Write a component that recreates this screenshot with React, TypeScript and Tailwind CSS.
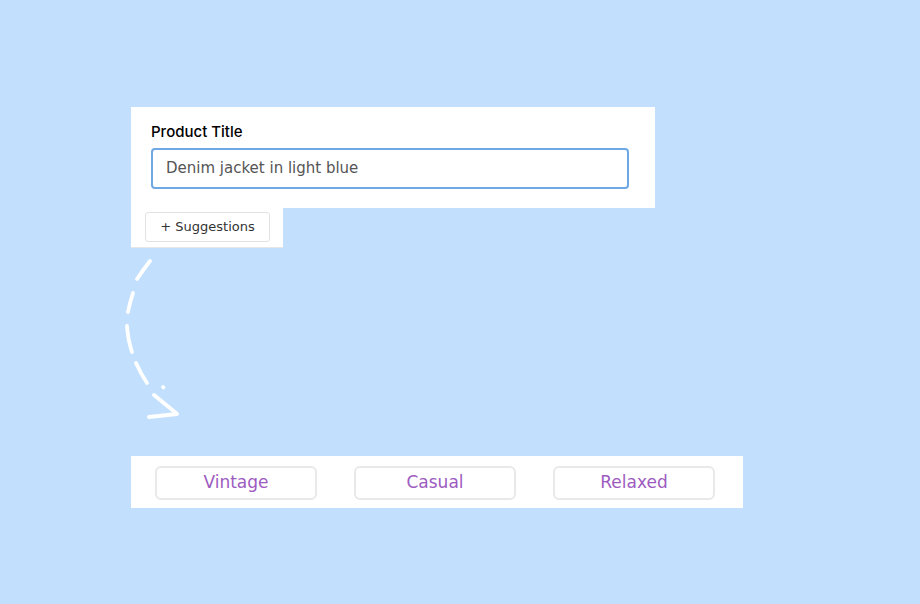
export default function App() {
  const tags = ['Vintage', 'Casual', 'Relaxed']

  return (
    <div
      className="w-[920px] h-[604px] bg-[#c2e0fe] pt-[107px] pl-[131px] overflow-hidden"
      style={{ fontFamily: '"DejaVu Sans", "Open Sans", sans-serif' }}
    >
      <div className="w-[524px] h-[101px] bg-white pt-[15px] px-[20px]">
        <div className="text-[15px] leading-[20px] font-medium text-black font-[Inter,sans-serif]">Product Title</div>
        <div className="mt-[6px] w-[478px] h-[41px] border-2 border-[#6ea9e6] rounded-[4px] flex items-center pl-[13px] text-[15px] text-[#555555]">
          Denim jacket in light blue
        </div>
      </div>

      <div className="w-[152px] h-[40px] bg-white pt-[4px] pl-[14px] border-b border-[#e6e6e6]">
        <button className="w-[125px] h-[30px] border border-[#e2e2e2] rounded-[3px] text-[13px] text-[#333333] bg-white">
          + Suggestions
        </button>
      </div>

      <svg width="70" height="208" viewBox="0 0 70 208" className="-ml-[10px] block" fill="none" stroke="white" strokeWidth="3.8" strokeLinecap="round">
        <path d="M29 13 Q22 22 16 31" />
        <path d="M12 45 Q9 54 7 64" />
        <path d="M6 78 Q7 92 11 104" />
        <path d="M15 115 Q20 126 26 135" />
        <path d="M42 139 L42.5 139.5" />
        <path d="M33 147 L55 165" />
        <path d="M28 169 L56 166" />
      </svg>

      <div className="w-[612px] h-[52px] bg-white flex items-center pl-[24px] gap-[37px]">
        {tags.map((t) => (
          <div
            key={t}
            className="w-[162px] h-[34px] mt-[2px] border-2 border-[#e9e9e9] rounded-[6px] flex items-center justify-center text-[17px] text-[#9d5bbf]"
          >
            {t}
          </div>
        ))}
      </div>
    </div>
  )
}
